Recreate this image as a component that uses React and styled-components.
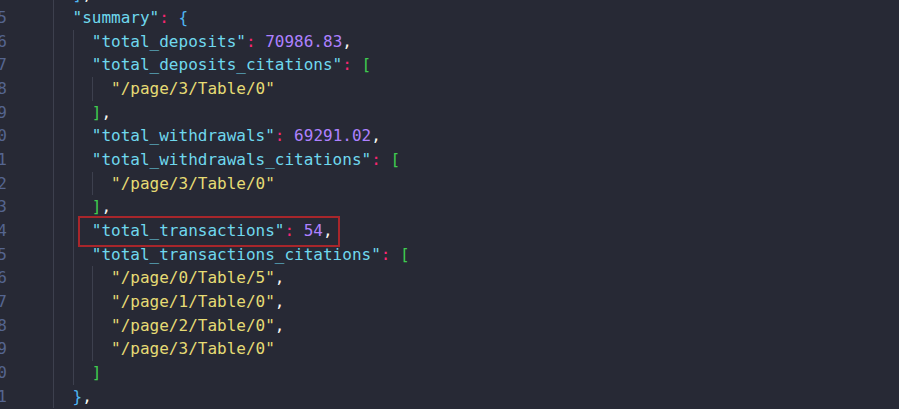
import styled, { createGlobalStyle } from 'styled-components';

const GlobalStyle = createGlobalStyle`
  html, body {
    margin: 0;
    padding: 0;
    background: #272935;
    overflow: hidden;
  }
`;

const Editor = styled.div`
  display: flex;
  flex-flow: row nowrap;
  width: 899px;
  height: 409px;
  overflow: hidden;
  background: #272935;
  font-family: 'DejaVu Sans Mono', 'Liberation Mono', monospace;
  font-size: 16px;
`;

const Gutter = styled.div`
  flex: 0 0 34px;
  min-width: 0;
  margin-top: -17.5px;
`;

const LineNumber = styled.div`
  display: flex;
  justify-content: flex-end;
  height: 23.67px;
  line-height: 23.67px;
  padding-right: 27px;
  color: #55658f;
  white-space: nowrap;
`;

const Code = styled.div`
  flex: 1;
  min-width: 0;
  margin-top: -17.5px;
`;

const Line = styled.div`
  position: relative;
  display: flex;
  flex-flow: row nowrap;
  height: 23.67px;
  line-height: 23.67px;
  white-space: pre;
  color: #f8f8f2;
`;

const Indent = styled.span`
  display: inline-block;
  flex: 0 0 2ch;
  height: 100%;
  box-sizing: border-box;
  border-left: 1px solid ${(p) => (p.guide ? '#3d404e' : 'transparent')};
`;

const Tok = styled.span`
  color: ${(p) =>
    ({
      key: '#6fd8ee',
      str: '#e6db74',
      num: '#ae81ff',
      colon: '#f92672',
      brace: '#4fb6f2',
      bracket: '#3fcc4f',
      punct: '#f8f8f2',
    })[p.kind]};
`;

const Highlight = styled.div`
  position: absolute;
  left: -14px;
  top: -3px;
  width: 258px;
  height: 27px;
  border: 2px solid #a8262b;
  pointer-events: none;
`;

const Marked = styled.span`
  position: relative;
  display: inline-flex;
`;

// guides: which indent levels draw a guide line on that row
const lines = [
  { depth: 2, guides: [1], toks: [['brace', ']'], ['punct', ',']] },
  { depth: 2, guides: [1], toks: [['key', '"summary"'], ['colon', ':'], ['punct', ' '], ['brace', '{']] },
  { depth: 3, guides: [1, 2], toks: [['key', '"total_deposits"'], ['colon', ':'], ['punct', ' '], ['num', '70986.83'], ['punct', ',']] },
  { depth: 3, guides: [1, 2], toks: [['key', '"total_deposits_citations"'], ['colon', ':'], ['punct', ' '], ['bracket', '[']] },
  { depth: 4, guides: [1, 2, 3], toks: [['str', '"/page/3/Table/0"']] },
  { depth: 3, guides: [1, 2], toks: [['bracket', ']'], ['punct', ',']] },
  { depth: 3, guides: [1, 2], toks: [['key', '"total_withdrawals"'], ['colon', ':'], ['punct', ' '], ['num', '69291.02'], ['punct', ',']] },
  { depth: 3, guides: [1, 2], toks: [['key', '"total_withdrawals_citations"'], ['colon', ':'], ['punct', ' '], ['bracket', '[']] },
  { depth: 4, guides: [1, 2, 3], toks: [['str', '"/page/3/Table/0"']] },
  { depth: 3, guides: [1, 2], toks: [['bracket', ']'], ['punct', ',']] },
  { depth: 3, guides: [1, 2], marked: true, toks: [['key', '"total_transactions"'], ['colon', ':'], ['punct', ' '], ['num', '54'], ['punct', ',']] },
  { depth: 3, guides: [1, 2], toks: [['key', '"total_transactions_citations"'], ['colon', ':'], ['punct', ' '], ['bracket', '[']] },
  { depth: 4, guides: [1, 2, 3], toks: [['str', '"/page/0/Table/5"'], ['punct', ',']] },
  { depth: 4, guides: [1, 2, 3], toks: [['str', '"/page/1/Table/0"'], ['punct', ',']] },
  { depth: 4, guides: [1, 2, 3], toks: [['str', '"/page/2/Table/0"'], ['punct', ',']] },
  { depth: 4, guides: [1, 2, 3], toks: [['str', '"/page/3/Table/0"']] },
  { depth: 3, guides: [1, 2], toks: [['bracket', ']']] },
  { depth: 2, guides: [1], toks: [['brace', '}'], ['punct', ',']] },
];

const FIRST_LINE = 54;

const CodeLine = ({ depth, guides, toks, marked }) => {
  const body = toks.map(([kind, text], i) => (
    <Tok key={i} kind={kind}>
      {text}
    </Tok>
  ));
  return (
    <Line>
      {Array.from({ length: depth }, (_, i) => (
        <Indent key={i} guide={guides.includes(i)} />
      ))}
      {marked ? (
        <Marked>
          {body}
          <Highlight />
        </Marked>
      ) : (
        body
      )}
    </Line>
  );
};

const App = () => {
  return (
    <>
      <GlobalStyle />
      <Editor>
        <Gutter>
          {lines.map((_, i) => (
            <LineNumber key={i}>{FIRST_LINE + i}</LineNumber>
          ))}
        </Gutter>
        <Code>
          {lines.map((l, i) => (
            <CodeLine key={i} {...l} />
          ))}
        </Code>
      </Editor>
    </>
  );
};

export default App;
